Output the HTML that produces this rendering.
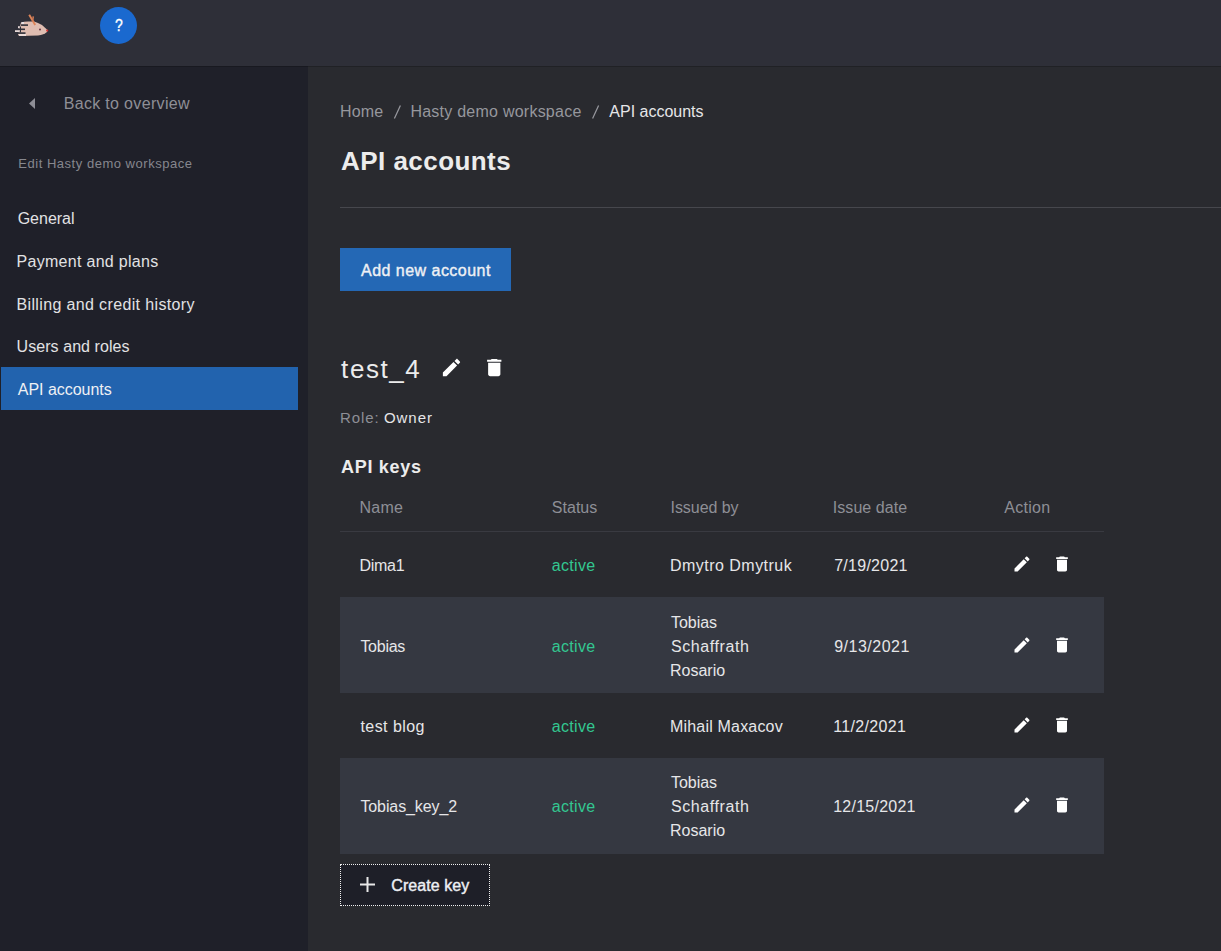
<!DOCTYPE html>
<html><head><meta charset="utf-8">
<style>
*{margin:0;padding:0;box-sizing:border-box}
html,body{width:1221px;height:951px;overflow:hidden;background:#292a2f;font-family:"Liberation Sans",sans-serif;color:#e8e8e8}
.abs{position:absolute}
.tx{position:absolute;white-space:nowrap}
#hdr{position:absolute;left:0;top:0;width:1221px;height:66px;background:#2e2f38}
#side{position:absolute;left:0;top:66px;width:308px;height:885px;background:#1f2029}
#main{position:absolute;left:308px;top:66px;width:913px;height:885px;background:#292a2f}
.help{position:absolute;left:100px;top:7px;width:37px;height:37px;border-radius:50%;background:#1a69cf}
.active{position:absolute;left:1px;top:367px;width:297px;height:43px;background:#2263ae}
.hr{position:absolute;left:340px;top:207px;width:881px;height:1px;background:#46474d}
.btn{position:absolute;left:340px;top:248px;width:171px;height:43px;background:#2468b5}
.row{position:absolute;left:340px;width:764px;background:#353841}
.ic{position:absolute}
.ck{position:absolute;left:340px;top:864px;width:150px;height:42px;background:#1e1f28;border:1px dotted #f0f0f0}
</style></head><body>
<div id="hdr"></div>
<div id="side"></div>
<div id="main"></div>
<div class="abs" style="left:0;top:66px;width:1221px;height:1px;background:rgba(0,0,0,.2)"></div>

<!-- logo -->
<svg class="abs" style="left:0;top:0" width="60" height="45" viewBox="0 0 60 45">
 <path d="M21 22.5 Q24 21.5 28 21.5 L34 21.5 Q38 22.5 42 25 L47.5 30 L47 32 Q44 34.5 38 35.5 L19 36 L18 34.5 Z" fill="#dfbdb1"/>
 <path d="M19 34 L26 34 L26 36 L19 36 Z" fill="#ecdcd8"/>
 <path d="M29.2 14.8 L35.2 25" stroke="#dc8458" stroke-width="1.9" fill="none"/>
 <path d="M33.3 16.3 L32.6 21.5" stroke="#cf7a55" stroke-width="1.5" fill="none"/>
 <rect x="21" y="24.3" width="7" height="1.6" fill="#2e2f38"/>
 <rect x="15.5" y="28.5" width="9.5" height="1.6" fill="#2e2f38"/>
 <rect x="17" y="32.3" width="8.5" height="1.6" fill="#2e2f38"/>
 <rect x="15" y="30.2" width="5.5" height="1.8" fill="#e6d8d6"/>
 <rect x="18" y="26.2" width="2.5" height="2" fill="#e6d8d6"/>
 <rect x="21.5" y="22" width="2.5" height="2" fill="#e6e0e4"/>
 <rect x="19.8" y="26.5" width="1.2" height="6" fill="#2e2f38"/>
 <circle cx="40" cy="29.5" r="0.9" fill="#5a2a3a"/>
 <circle cx="47.2" cy="30.6" r="1.1" fill="#d83030"/>
</svg>
<div class="help"></div>
<div class="tx" style="left:114.5px;top:13.8px;font-size:17px;line-height:24px;color:#fff;transform:scaleX(.82);transform-origin:0 0;-webkit-text-stroke:0.35px #fff">?</div>

<!-- sidebar -->
<svg class="abs" style="left:29px;top:98px" width="7" height="11" viewBox="0 0 7 11"><path d="M6 0 L0 5.5 L6 11 Z" fill="#8e8e96"/></svg>
<div class="active"></div>

<!-- main shapes -->
<svg class="abs" style="left:0;top:0" width="700" height="130"><path d="M394.4 118.6 L400.4 105.4 M592.6 118.6 L598.6 105.4" stroke="#96979d" stroke-width="1.25" fill="none"/></svg>
<div class="hr"></div>
<div class="btn"></div>

<svg class="ic" style="left:439.8px;top:356px" width="23" height="23" viewBox="0 0 24 24"><path fill="#fff" d="M3 17.25V21h3.75L17.81 9.94l-3.75-3.75L3 17.25zM20.71 7.04c.39-.39.39-1.02 0-1.41l-2.34-2.34c-.39-.39-1.02-.39-1.41 0l-1.83 1.83 3.75 3.75 1.83-1.83z"/></svg>
<svg class="ic" style="left:481.8px;top:356px" width="24.5" height="23" viewBox="0 0 24 24" preserveAspectRatio="none"><path fill="#fff" d="M6 19c0 1.1.9 2 2 2h8c1.1 0 2-.9 2-2V7H6v12zM19 4h-3.5l-1-1h-5l-1 1H5v2h14V4z"/></svg>

<div class="abs" style="left:340px;top:531px;width:764px;height:1px;background:#393a41"></div>
<div class="row" style="top:597px;height:96px"></div>
<div class="row" style="top:758px;height:96px"></div>

<!-- row icons -->
<svg class="ic" style="left:1012px;top:554px" width="20" height="20" viewBox="0 0 24 24"><path fill="#fff" d="M3 17.25V21h3.75L17.81 9.94l-3.75-3.75L3 17.25zM20.71 7.04c.39-.39.39-1.02 0-1.41l-2.34-2.34c-.39-.39-1.02-.39-1.41 0l-1.83 1.83 3.75 3.75 1.83-1.83z"/></svg>
<svg class="ic" style="left:1051.6px;top:554px" width="20" height="20" viewBox="0 0 24 24"><path fill="#fff" d="M6 19c0 1.1.9 2 2 2h8c1.1 0 2-.9 2-2V7H6v12zM19 4h-3.5l-1-1h-5l-1 1H5v2h14V4z"/></svg>
<svg class="ic" style="left:1012px;top:635px" width="20" height="20" viewBox="0 0 24 24"><path fill="#fff" d="M3 17.25V21h3.75L17.81 9.94l-3.75-3.75L3 17.25zM20.71 7.04c.39-.39.39-1.02 0-1.41l-2.34-2.34c-.39-.39-1.02-.39-1.41 0l-1.83 1.83 3.75 3.75 1.83-1.83z"/></svg>
<svg class="ic" style="left:1051.6px;top:635px" width="20" height="20" viewBox="0 0 24 24"><path fill="#fff" d="M6 19c0 1.1.9 2 2 2h8c1.1 0 2-.9 2-2V7H6v12zM19 4h-3.5l-1-1h-5l-1 1H5v2h14V4z"/></svg>
<svg class="ic" style="left:1012px;top:715px" width="20" height="20" viewBox="0 0 24 24"><path fill="#fff" d="M3 17.25V21h3.75L17.81 9.94l-3.75-3.75L3 17.25zM20.71 7.04c.39-.39.39-1.02 0-1.41l-2.34-2.34c-.39-.39-1.02-.39-1.41 0l-1.83 1.83 3.75 3.75 1.83-1.83z"/></svg>
<svg class="ic" style="left:1051.6px;top:715px" width="20" height="20" viewBox="0 0 24 24"><path fill="#fff" d="M6 19c0 1.1.9 2 2 2h8c1.1 0 2-.9 2-2V7H6v12zM19 4h-3.5l-1-1h-5l-1 1H5v2h14V4z"/></svg>
<svg class="ic" style="left:1012px;top:795px" width="20" height="20" viewBox="0 0 24 24"><path fill="#fff" d="M3 17.25V21h3.75L17.81 9.94l-3.75-3.75L3 17.25zM20.71 7.04c.39-.39.39-1.02 0-1.41l-2.34-2.34c-.39-.39-1.02-.39-1.41 0l-1.83 1.83 3.75 3.75 1.83-1.83z"/></svg>
<svg class="ic" style="left:1051.6px;top:795px" width="20" height="20" viewBox="0 0 24 24"><path fill="#fff" d="M6 19c0 1.1.9 2 2 2h8c1.1 0 2-.9 2-2V7H6v12zM19 4h-3.5l-1-1h-5l-1 1H5v2h14V4z"/></svg>

<!-- create key -->
<div class="ck"></div>
<svg class="ic" style="left:360px;top:877px" width="15" height="15" viewBox="0 0 15 15"><path d="M7.5 0V15M0 7.5H15" stroke="#e8e8e8" stroke-width="2"/></svg>

<div class="tx" style="left:63.70px;top:94.00px;font-size:16px;line-height:20px;font-weight:normal;color:#8e8f96;letter-spacing:0.328px;">Back to overview</div>
<div class="tx" style="left:18.30px;top:156.20px;font-size:13px;line-height:16px;font-weight:normal;color:#86878e;letter-spacing:0.521px;">Edit Hasty demo workspace</div>
<div class="tx" style="left:17.70px;top:209.40px;font-size:16px;line-height:20px;font-weight:normal;color:#e2e2e4;letter-spacing:-0.011px;">General</div>
<div class="tx" style="left:16.50px;top:252.20px;font-size:16px;line-height:20px;font-weight:normal;color:#e2e2e4;letter-spacing:0.295px;">Payment and plans</div>
<div class="tx" style="left:16.50px;top:294.70px;font-size:16px;line-height:20px;font-weight:normal;color:#e2e2e4;letter-spacing:0.361px;">Billing and credit history</div>
<div class="tx" style="left:16.50px;top:337.10px;font-size:16px;line-height:20px;font-weight:normal;color:#e2e2e4;letter-spacing:0.075px;">Users and roles</div>
<div class="tx" style="left:17.80px;top:379.60px;font-size:16px;line-height:20px;font-weight:normal;color:#eef0f4;letter-spacing:-0.034px;">API accounts</div>
<div class="tx" style="left:340.10px;top:102.00px;font-size:16px;line-height:20px;font-weight:normal;color:#96979d;letter-spacing:0.106px;">Home</div>
<div class="tx" style="left:410.40px;top:102.00px;font-size:16px;line-height:20px;font-weight:normal;color:#96979d;letter-spacing:0.243px;">Hasty demo workspace</div>
<div class="tx" style="left:609.30px;top:102.00px;font-size:16px;line-height:20px;font-weight:normal;color:#e6e6e8;letter-spacing:-0.007px;">API accounts</div>
<div class="tx" style="left:341.10px;top:145.30px;font-size:26px;line-height:32px;font-weight:bold;color:#ececec;letter-spacing:0.441px;">API accounts</div>
<div class="tx" style="left:361.10px;top:261.00px;font-size:16px;line-height:20px;font-weight:normal;color:#eef0f4;letter-spacing:0.464px;-webkit-text-stroke:0.4px #eef0f4;">Add new account</div>
<div class="tx" style="left:341.10px;top:352.90px;font-size:26px;line-height:32px;font-weight:normal;color:#ececec;letter-spacing:1.567px;">test_4</div>
<div class="tx" style="left:340.10px;top:408.10px;font-size:15px;line-height:19px;font-weight:normal;color:#8e8f96;letter-spacing:0.888px;">Role:</div>
<div class="tx" style="left:384.00px;top:408.10px;font-size:15px;line-height:19px;font-weight:normal;color:#e6e6e8;letter-spacing:0.929px;">Owner</div>
<div class="tx" style="left:341.10px;top:455.80px;font-size:18px;line-height:22px;font-weight:bold;color:#ececec;letter-spacing:0.680px;">API keys</div>
<div class="tx" style="left:359.50px;top:498.30px;font-size:16px;line-height:20px;font-weight:normal;color:#8e8f96;letter-spacing:0.273px;">Name</div>
<div class="tx" style="left:551.80px;top:498.30px;font-size:16px;line-height:20px;font-weight:normal;color:#8e8f96;letter-spacing:0.028px;">Status</div>
<div class="tx" style="left:670.50px;top:498.30px;font-size:16px;line-height:20px;font-weight:normal;color:#8e8f96;letter-spacing:-0.048px;">Issued by</div>
<div class="tx" style="left:832.80px;top:498.30px;font-size:16px;line-height:20px;font-weight:normal;color:#8e8f96;letter-spacing:0.052px;">Issue date</div>
<div class="tx" style="left:1004.20px;top:498.30px;font-size:16px;line-height:20px;font-weight:normal;color:#8e8f96;letter-spacing:0.306px;">Action</div>
<div class="tx" style="left:359.40px;top:556.40px;font-size:16px;line-height:20px;font-weight:normal;color:#e6e6e8;letter-spacing:-0.259px;">Dima1</div>
<div class="tx" style="left:551.80px;top:556.40px;font-size:16px;line-height:20px;font-weight:normal;color:#33c791;letter-spacing:0.320px;">active</div>
<div class="tx" style="left:670.00px;top:556.40px;font-size:16px;line-height:20px;font-weight:normal;color:#e6e6e8;letter-spacing:0.473px;">Dmytro Dmytruk</div>
<div class="tx" style="left:834.20px;top:556.40px;font-size:16px;line-height:20px;font-weight:normal;color:#e6e6e8;letter-spacing:0.265px;">7/19/2021</div>
<div class="tx" style="left:360.40px;top:637.00px;font-size:16px;line-height:20px;font-weight:normal;color:#e6e6e8;letter-spacing:-0.270px;">Tobias</div>
<div class="tx" style="left:551.80px;top:637.00px;font-size:16px;line-height:20px;font-weight:normal;color:#33c791;letter-spacing:0.320px;">active</div>
<div class="tx" style="left:671.00px;top:613.40px;font-size:16px;line-height:20px;font-weight:normal;color:#e6e6e8;letter-spacing:-0.050px;">Tobias</div>
<div class="tx" style="left:671.00px;top:637.00px;font-size:16px;line-height:20px;font-weight:normal;color:#e6e6e8;letter-spacing:0.584px;">Schaffrath</div>
<div class="tx" style="left:670.00px;top:660.60px;font-size:16px;line-height:20px;font-weight:normal;color:#e6e6e8;letter-spacing:-0.006px;">Rosario</div>
<div class="tx" style="left:834.20px;top:637.00px;font-size:16px;line-height:20px;font-weight:normal;color:#e6e6e8;letter-spacing:0.502px;">9/13/2021</div>
<div class="tx" style="left:360.40px;top:717.00px;font-size:16px;line-height:20px;font-weight:normal;color:#e6e6e8;letter-spacing:0.452px;">test blog</div>
<div class="tx" style="left:551.80px;top:717.00px;font-size:16px;line-height:20px;font-weight:normal;color:#33c791;letter-spacing:0.320px;">active</div>
<div class="tx" style="left:670.00px;top:717.00px;font-size:16px;line-height:20px;font-weight:normal;color:#e6e6e8;letter-spacing:0.188px;">Mihail Maxacov</div>
<div class="tx" style="left:833.20px;top:717.00px;font-size:16px;line-height:20px;font-weight:normal;color:#e6e6e8;letter-spacing:0.351px;">11/2/2021</div>
<div class="tx" style="left:360.40px;top:797.00px;font-size:16px;line-height:20px;font-weight:normal;color:#e6e6e8;letter-spacing:-0.095px;">Tobias_key_2</div>
<div class="tx" style="left:551.80px;top:797.00px;font-size:16px;line-height:20px;font-weight:normal;color:#33c791;letter-spacing:0.320px;">active</div>
<div class="tx" style="left:671.00px;top:773.40px;font-size:16px;line-height:20px;font-weight:normal;color:#e6e6e8;letter-spacing:-0.050px;">Tobias</div>
<div class="tx" style="left:671.00px;top:797.00px;font-size:16px;line-height:20px;font-weight:normal;color:#e6e6e8;letter-spacing:0.584px;">Schaffrath</div>
<div class="tx" style="left:670.00px;top:820.60px;font-size:16px;line-height:20px;font-weight:normal;color:#e6e6e8;letter-spacing:-0.006px;">Rosario</div>
<div class="tx" style="left:833.20px;top:797.00px;font-size:16px;line-height:20px;font-weight:normal;color:#e6e6e8;letter-spacing:0.247px;">12/15/2021</div>
<div class="tx" style="left:391.30px;top:875.90px;font-size:16px;line-height:20px;font-weight:normal;color:#eef0f4;letter-spacing:0.070px;-webkit-text-stroke:0.4px #eef0f4;">Create key</div>
</body></html>
